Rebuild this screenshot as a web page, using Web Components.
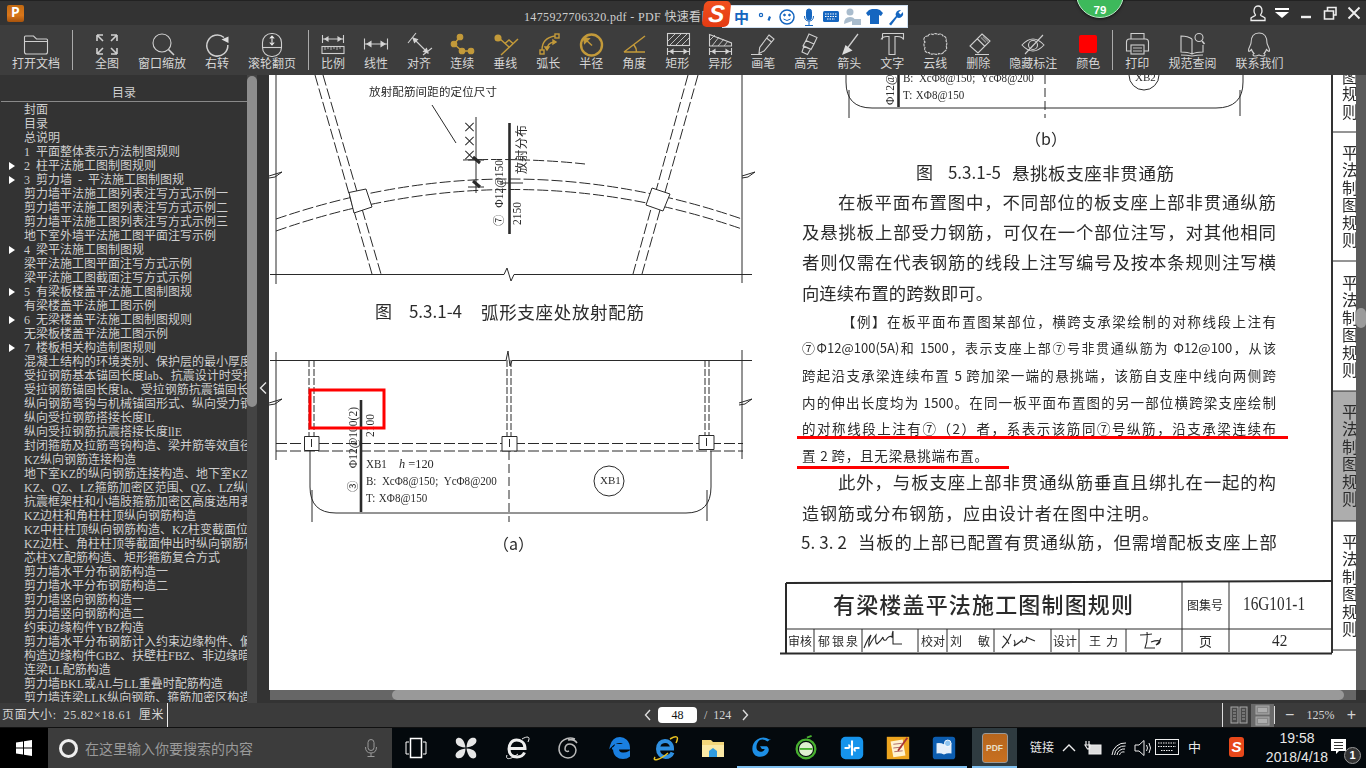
<!DOCTYPE html>
<html lang="zh-CN">
<head>
<meta charset="utf-8">
<title>PDF 快速看图</title>
<style>
html, body { margin: 0; padding: 0; background: #333; }
body { width: 1366px; height: 768px; overflow: hidden; display: flex; flex-direction: column; font-family: "Liberation Serif", "Noto Sans CJK SC", serif; font-size: 12px; }
.main { display: flex; height: 628px; }
</style>
</head>
<body>
<app-titlebar></app-titlebar>
<app-toolbar></app-toolbar>
<div class="main">
	<toc-panel></toc-panel>
	<scan-view></scan-view>
</div>
<app-status></app-status>
<win-taskbar></win-taskbar>

<script>
const UI_FONT = `"Liberation Serif", "Noto Sans CJK SC", sans-serif`;
const GOLD = "#c39a3a";

// Toolbar icons, 40 wide and centred over the label
const ICONS = {
	folder: `<path d="M8.5 21V6q0-1 1-1h8l3 3h10q1 0 1 1v12q0 2-2 2H10.5q-2 0-2-2zM8.5 10.5h23"/>`,
	full: `<path d="M10 4l6 6M10 4h6M10 4v6M30 4l-6 6M30 4h-6M30 4v6M10 23l6-6M10 23h6M10 23v-6M30 23l-6-6M30 23h-6M30 23v-6" stroke-width="1.6"/>`,
	zoom: `<circle cx="20" cy="12" r="9"/><path d="M26.5 18.5L32 24" stroke-width="1.6"/>`,
	rotate: `<path d="M27 6.5A10.500 10.500 0 1 0 30.8 14" stroke-width="1.5"/><path d="M24.5 8.500L31.5 5.5V12z" fill="#ddd" stroke="none"/>`,
	wheel: `<rect x="10.5" y="2.5" width="19" height="23" rx="9"/><path d="M10.5 16.5h19"/><path d="M20 5.5v8M17.8 7.5L20 5l2.2 2.5M17.8 11.5L20 14l2.2-2.5" stroke="#eee"/>`,
	scale: `<path d="M9.5 4v8M30.5 4v8M10 8h20"/><path d="M12 8l3-2v4zM28 8l-3-2v4z" fill="#ddd"/><rect x="9" y="15.5" width="22" height="7"/><path d="M12 16v3M15 16v2M18 16v3M21 16v2M24 16v3M27 16v2" stroke-width=".8"/>`,
	linear: `<path d="M8.5 7.5v11M31.5 7.5v11M9 13h22"/><path d="M11 13l4-2.5v5zM29 13l-4-2.5v5z" fill="#ddd"/>`,
	align: `<path d="M9 12L17 2M24 24l9-7M14 7l15 15"/><path d="M14 7l4.500 1.500-3 3zM29 22l-4.500-1.500 3-3z" fill="#ddd"/>`,
	chain: `<g stroke="${GOLD}" fill="${GOLD}"><path d="M18 6l-6 7 8 7h9" fill="none" stroke-width="1.5"/><circle cx="18" cy="6" r="2.8"/><circle cx="12" cy="13" r="2.8"/><circle cx="20" cy="20" r="2.8"/><circle cx="29" cy="20" r="2.8"/></g>`,
	perp: `<g stroke="${GOLD}" stroke-width="1.5"><path d="M33 8L16 24M14 7l10 9M20 12.5l4-3.5 4 3.5"/><circle cx="13" cy="7" r="2.8" fill="${GOLD}"/></g>`,
	arc: `<g stroke="${GOLD}" stroke-width="1.4"><path d="M14 19Q14 7 27 5M19 19Q19 12 26 11"/><rect x="12" y="19" width="4" height="4"/><rect x="27" y="3" width="4" height="4"/><path d="M17 16l2 3 2-3zM25 9l3 2-3 2z" fill="${GOLD}"/></g>`,
	radius: `<g stroke="${GOLD}"><circle cx="20.5" cy="14" r="10.5" stroke-width="2.4"/><path d="M21 14.5L14 8" stroke-width="1.4"/><path d="M12.5 6.5l6 1-5 5z" fill="${GOLD}"/></g>`,
	angle: `<g stroke="${GOLD}" stroke-width="1.5"><path d="M10 21h21M10 21L31 5M20 14q2.500 3 2.500 7"/></g>`,
	rectH: `<rect x="10.5" y="2.5" width="22" height="12"/><path d="M11 10l7-7M13 14l11-11M19 14l11-11M25 14l7-7" stroke-width=".9"/><path d="M10.5 17v7M32.5 17v7M11 20.5h21"/><path d="M13 20.5l3-2v4zM30 20.5l-3-2v4z" fill="#ddd"/>`,
	polyH: `<path d="M9.5 3.5L31.5 12v3h-22z"/><path d="M10 9l5-5M12 15l7-9M18 15l6-7M24 15l4-5" stroke-width=".9"/><path d="M9.5 17v7M31.5 17v7M10 20.5h21"/><path d="M12 20.5l3-2v4zM29 20.5l-3-2v4z" fill="#ddd"/>`,
	pencil: `<path d="M26 4l5 4-10 12-5 2.5.7-6zM23.5 7l5 4M8 23.5h11"/>`,
	marker: `<path d="M23 3l8 3.5-3 6.5-8-3.500zM20 9.500l8 3.500-3 5.500-8-3.500zM18 15l6.500 3-3 5.500-5.500-2.500z"/>`,
	arrow: `<path d="M29 3L17 19" stroke-width="1.3"/><path d="M13 24l3.5-10 7 5.500z" fill="#ddd" stroke="none"/>`,
	text: `<path d="M10.5 2.5h21v6c-1-2-3-3-6-3h-2.5v18h-6v-18H15c-3 0-5 1-6 3"/><path d="M10.5 2.5v6"/>`,
	cloud: `<path d="M13 5a3.500 3.500 0 0 1 5-1.500a4 4 0 0 1 5 0a3.500 3.500 0 0 1 5 1.500a3.500 3.500 0 0 1 3 5a4 4 0 0 1 0 5a3.500 3.500 0 0 1-2 5.500a3.500 3.500 0 0 1-5 2a4 4 0 0 1-5 0a3.500 3.500 0 0 1-5-1a3.500 3.500 0 0 1-4-5a4 4 0 0 1 0-5.500a3.500 3.500 0 0 1 3-6z" stroke-dasharray="3 .6"/>`,
	eraser: `<path d="M24 3l8 7-12 12-8-7zM19 7.5l7.5 7.5M17 23.5h14"/><path d="M23 6.500l5 5M25 5.500l5 5" stroke-width="1.500" stroke="#888"/>`,
	eye: `<path d="M9 14q11-12 22 0q-11 12-22 0z"/><circle cx="20" cy="14" r="4.5"/><path d="M12 23L30 4"/>`,
	color: `<rect x="11" y="4" width="18" height="18" rx="2" fill="#f00" stroke="none"/>`,
	print: `<path d="M14 8V2.5h13V8M14 20H9.5V11q0-3 3-3h16q3 0 3 3v9H27"/><rect x="14" y="14" width="13" height="9"/><path d="M16 17h9M16 20h9" stroke-width=".9"/>`,
	book: `<path d="M20 8q-4-3-11-3v16q7 0 11 2q4-2 11-2V14M20 8v15M9 24q6 0 11 1q5-1 11-1"/><circle cx="27" cy="6.5" r="4"/><path d="M30 10l2.5 3" stroke-width="1.6"/>`,
	qq: `<path d="M20 2c-6 0-8 5-8 10 0 2-3 5-2.500 8 .5 1 2-.5 3-1.500 .5 2 1.500 3 2.500 4-1.500 1-1.500 2.500 1 2.500 2 0 3-.5 4-1 1 .5 2 1 4 1 2.500 0 2.500-1.500 1-2.500 1-1 2-2 2.500-4 1 1 2.500 2.500 3 1.500 .5-3-2.500-6-2.500-8 0-5-2-10-8-10z"/>`
};

class AppTitlebar extends HTMLElement{

	connectedCallback(){

		this.attachShadow({mode: "open"});

		this.shadowRoot.innerHTML = `
<style>
:host { display: flex; align-items: center; height: 25px; position: relative; background: #333; border-top: 1px solid #222; box-sizing: border-box; color: #cfcfcf; font: 12px ${UI_FONT}; }
.logo { width: 17px; height: 17px; margin-left: 7px; border-radius: 2px; background: linear-gradient(#c26a12, #d9761a 60%, #a7530c); color: #fff; font: bold 14px/17px "Liberation Mono", monospace; text-align: center; }
.title { position: absolute; left: 524px; top: 6px; white-space: pre; letter-spacing: .35px; }
.controls { margin-left: auto; display: flex; }
.controls div { width: 24px; height: 24px; display: flex; align-items: center; justify-content: center; }
.controls svg { width: 20px; height: 20px; fill: none; stroke: #eee; stroke-width: 1.3; }
.badge { position: absolute; left: 1076px; top: -31px; width: 46px; height: 46px; border-radius: 50%; background: #3db95b; border: 1px solid #bde6c8; box-shadow: 0 1px 3px #0009; color: #fff; font: bold 11.5px/12px "Liberation Sans", sans-serif; text-align: center; }
.badge span { position: absolute; left: 0; right: 0; top: 33px; }
.ime { position: absolute; left: 703px; top: 0; height: 27px; width: 205px; display: flex; align-items: center; }
.ime .s { position: absolute; left: 0; top: 0; width: 27px; height: 26px; border-radius: 5px; transform: skewX(-6deg); background: linear-gradient(#f0501e, #e33a12); color: #fff; font: italic bold 24px/25px "Liberation Sans", sans-serif; text-align: center; }
.ime .bar { margin-left: 19px; margin-top: 3px; height: 23px; width: 186px; background: #fff; border: 1px solid #cfe0f2; box-sizing: border-box; position: relative; }
.ime .zh { position: absolute; left: 11px; top: 2px; color: #1566c0; font: bold 15px/18px "Noto Sans CJK SC", sans-serif; }
.ime svg { position: absolute; left: 0; top: 0; width: 184px; height: 21px; }
</style>
<div class="logo">P</div>
<div class="title">1475927706320.pdf - PDF 快速看图</div>
<div class="badge"><span>79</span></div>
<div class="ime">
	<div class="bar">
		<div class="zh">中</div>
		<svg viewBox="722 3 184 21" fill="none" stroke="#1566c0">
			<circle cx="760" cy="12" r="1.6" stroke-width="1.2"/><path d="M769 13.5l-1.5 4" stroke-width="2.2"/>
			<circle cx="786" cy="14" r="7" stroke-width="1.5"/><circle cx="783.5" cy="12" r=".9" fill="#1566c0"/><circle cx="788.5" cy="12" r=".9" fill="#1566c0"/><path d="M782.5 16q3.500 3 7 0"/>
			<rect x="805.5" y="6" width="5" height="11" rx="2.5" fill="#1566c0"/><path d="M803.5 13q0 5 4.500 5t4.500-5M808 18v4M804 22.5h8"/>
			<rect x="822" y="8" width="16" height="11" rx="1.5" fill="#1566c0" stroke="none"/><path d="M824 11h12M824 13.5h12M826 16h8" stroke="#fff" stroke-dasharray="1.5 1"/>
			<circle cx="849" cy="9" r="3.5" fill="#a9bccd" stroke="none"/><path d="M843 21q0-7 6-7 4 0 5 3" fill="#a9bccd" stroke="none"/><rect x="851" y="16" width="9" height="6" fill="#a9bccd" stroke="none"/>
			<path d="M868 7l3-1h5l3 1 3 3-2 3-2-1v9h-9v-9l-2 1-2-3z" fill="#1566c0" stroke="none"/>
			<path d="M888 21l7-8a4.500 4.500 0 0 1 5-6l-2.500 2.500 2 2L902 9a4.500 4.500 0 0 1-6 5.500l-6 8z" fill="#1566c0" stroke="none"/>
		</svg>
	</div>
	<div class="s">S</div>
</div>
<div class="controls">
	<div><svg viewBox="0 0 20 20"><path d="M10 3c-3 0-4 2.500-4 5 0 2 1 3 1.500 4 0 1-3 1.500-4.500 3v2.500h14V15c-1.500-1.500-4.500-2-4.500-3 .5-1 1.500-2 1.500-4 0-2.500-1-5-4-5z"/></svg></div>
	<div><svg viewBox="0 0 20 20"><path d="M3 5h14v2H3z" fill="#fff" stroke="none"/><path d="M3 9h14l-7 6z" fill="#fff" stroke="none"/></svg></div>
	<div><svg viewBox="0 0 20 20"><path d="M5 14h10" stroke-width="2.4"/></svg></div>
	<div><svg viewBox="0 0 20 20"><path d="M4.500 8h9v8h-9zM7.500 8V4.500h8.500V12h-3" stroke-width="1.6"/></svg></div>
	<div><svg viewBox="0 0 20 20"><path d="M4.500 4.500l11 11M15.500 4.500l-11 11" stroke-width="1.9"/></svg></div>
</div>
		`;

	}

}

class ToolBtn extends HTMLElement{

	connectedCallback(){

		this.attachShadow({mode: "open"});

		this.shadowRoot.innerHTML = `
<style>
:host { display: flex; flex-direction: column; align-items: center; padding-top: 6px; color: #d6d6d6; font: 12px/14px ${UI_FONT}; }
/* the icon is wider than a two character label, so it takes no room of its own */
.icon { height: 26px; width: 0; display: flex; justify-content: center; }
svg { flex: none; width: 40px; height: 26px; overflow: visible; fill: none; stroke: #cfcfcf; stroke-width: 1.1; }
span { white-space: nowrap; }
</style>
<div class="icon"><svg viewBox="0 0 40 26">${ICONS[this.getAttribute("icon")]}</svg></div>
<span>${this.getAttribute("label")}</span>
		`;

	}

}

class AppToolbar extends HTMLElement{

	connectedCallback(){

		this.attachShadow({mode: "open"});

		const groups = [
			[["folder", "打开文档"]],
			[["full", "全图"], ["zoom", "窗口缩放"], ["rotate", "右转"], ["wheel", "滚轮翻页"]],
			[["scale", "比例"], ["linear", "线性"], ["align", "对齐"], ["chain", "连续"], ["perp", "垂线"], ["arc", "弧长"], ["radius", "半径"], ["angle", "角度"], ["rectH", "矩形"], ["polyH", "异形"], ["pencil", "画笔"], ["marker", "高亮"], ["arrow", "箭头"], ["text", "文字"], ["cloud", "云线"], ["eraser", "删除"], ["eye", "隐藏标注"], ["color", "颜色"]],
			[["print", "打印"], ["book", "规范查阅"], ["qq", "联系我们"]]
		];

		const html = groups.map((tools, i) => `
			${i ? `<i></i>` : ""}
			<div class="group">
				${tools.map(([icon, label]) => `<tool-btn icon="${icon}" label="${label}"></tool-btn>`).join("")}
			</div>
		`).join("");

		this.shadowRoot.innerHTML = `
<style>
:host { display: flex; height: 50px; background: #3d3d3d; padding-left: 12px; }
.group { display: flex; gap: 19px; }
i { width: 1px; height: 40px; margin: 5px 12px 0; background: #aaa; }
i:nth-of-type(1) { margin-right: 22px; }
</style>
${html}
		`;

	}

}

class TocRow extends HTMLElement{

	connectedCallback(){

		this.attachShadow({mode: "open"});

		const open = this.hasAttribute("branch");
		this.shadowRoot.innerHTML = `
<style>
:host { display: block; height: 14px; line-height: 14px; padding-left: 24px; position: relative; white-space: nowrap; overflow: hidden; word-spacing: 3px; }
b { position: absolute; left: 9px; top: 3px; border-left: 6px solid #fff; border-top: 4.5px solid transparent; border-bottom: 4.5px solid transparent; }
</style>
${open ? "<b></b>" : ""}<slot></slot>
		`;

	}

}

class TocPanel extends HTMLElement{

	connectedCallback(){

		this.attachShadow({mode: "open"});

		const rows = [
			"封面", "目录", "总说明", "1 平面整体表示方法制图规则", ">2 柱平法施工图制图规则", ">3 剪力墙 - 平法施工图制图规",
			"剪力墙平法施工图列表注写方式示例一", "剪力墙平法施工图列表注写方式示例二", "剪力墙平法施工图列表注写方式示例三", "地下室外墙平法施工图平面注写示例",
			">4 梁平法施工图制图规", "梁平法施工图平面注写方式示例", "梁平法施工图截面注写方式示例", ">5 有梁板楼盖平法施工图制图规", "有梁楼盖平法施工图示例",
			">6 无梁楼盖平法施工图制图规则", "无梁板楼盖平法施工图示例", ">7 楼板相关构造制图规则",
			"混凝土结构的环境类别、保护层的最小厚度", "受拉钢筋基本锚固长度lab、抗震设计时受拉钢筋", "受拉钢筋锚固长度la、受拉钢筋抗震锚固长度", "纵向钢筋弯钩与机械锚固形式、纵向受力钢筋",
			"纵向受拉钢筋搭接长度lL", "纵向受拉钢筋抗震搭接长度llE", "封闭箍筋及拉筋弯钩构造、梁并筋等效直径", "KZ纵向钢筋连接构造", "地下室KZ的纵向钢筋连接构造、地下室KZ的",
			"KZ、QZ、LZ箍筋加密区范围、QZ、LZ纵向钢筋", "抗震框架柱和小墙肢箍筋加密区高度选用表", "KZ边柱和角柱柱顶纵向钢筋构造", "KZ中柱柱顶纵向钢筋构造、KZ柱变截面位置", "KZ边柱、角柱柱顶等截面伸出时纵向钢筋构造",
			"芯柱XZ配筋构造、矩形箍筋复合方式", "剪力墙水平分布钢筋构造一", "剪力墙水平分布钢筋构造二", "剪力墙竖向钢筋构造一", "剪力墙竖向钢筋构造二", "约束边缘构件YBZ构造",
			"剪力墙水平分布钢筋计入约束边缘构件、偏心", "构造边缘构件GBZ、扶壁柱FBZ、非边缘暗柱", "连梁LL配筋构造", "剪力墙BKL或AL与LL重叠时配筋构造", "剪力墙连梁LLK纵向钢筋、箍筋加密区构造"
		];

		const html = rows.map(row => row[0] === ">"
			? `<toc-row branch>${row.slice(1)}</toc-row>`
			: `<toc-row>${row}</toc-row>`).join("");

		this.shadowRoot.innerHTML = `
<style>
:host { display: flex; width: 269px; height: 628px; flex: none; background: #333; color: #cfcfcf; font: 12px ${UI_FONT}; }
.tree { width: 247px; display: flex; flex-direction: column; overflow: hidden; }
header { height: 26px; line-height: 36px; text-align: center; border-bottom: 1px solid #8a8a8a; margin-left: 1px; flex: none; }
.rows { padding-top: 1px; height: 599px; overflow: hidden; }
.track { width: 10px; background: #444; flex: none; }
.thumb { height: 331px; margin-top: 1px; background: #8e8e8e; border-radius: 5px; }
.fold { flex: 1; display: flex; align-items: flex-start; justify-content: center; }
.fold svg { width: 10px; height: 14px; margin-top: 306px; fill: none; stroke: #e6e6e6; stroke-width: 1.4; }
</style>
<div class="tree"><header>目录</header><div class="rows">${html}</div></div>
<div class="track"><div class="thumb"></div></div>
<div class="fold"><svg viewBox="0 0 10 14"><path d="M8 1.5L2.5 7 8 12.5"/></svg></div>
		`;

	}

}

// A piece of text on the scanned page: x and y in screen pixels, y is the centre of the line
class ScanLine extends HTMLElement{

	connectedCallback(){

		this.attachShadow({mode: "open"});

		const get = name => this.getAttribute(name);
		const size = Number(get("size") || 12);
		const width = get("w");
		const x = Number(get("x")) - 269;
		const y = Number(get("y")) - 75;
		const squeeze = get("sx") ? `scaleX(${get("sx")})` : "";

		const place = this.hasAttribute("up")
			? `left:${x}px; top:${y}px; transform-origin: 0 0; transform: rotate(-90deg) ${squeeze};`
			: `left:${x}px; top:${y - size * .6}px; transform-origin: 0 50%; transform: ${squeeze || "none"};`;

		this.shadowRoot.innerHTML = `
<style>
:host { display: block; position: absolute; ${place} ${width ? `width:${width}px;` : "white-space: nowrap;"} font-size: ${size}px; line-height: ${size * 1.2}px; text-align: justify; text-align-last: justify; font-weight: ${get("weight") || 400}; font-family: ${get("face") === "serif" ? `"Liberation Serif", "Noto Sans CJK SC", serif` : `"Noto Sans CJK SC", "Liberation Sans", sans-serif`}; }
</style>
<slot></slot>
		`;

	}

}

class ScanTab extends HTMLElement{

	connectedCallback(){

		this.attachShadow({mode: "open"});

		this.shadowRoot.innerHTML = `
<style>
:host { display: block; position: absolute; left: ${1342 - 269}px; top: ${Number(this.getAttribute("y")) - 75}px; writing-mode: vertical-rl; text-orientation: upright; font: 16px/16px "Noto Sans CJK SC", sans-serif; letter-spacing: 1.4px; }
</style>
<slot></slot>
		`;

	}

}

class ScanView extends HTMLElement{

	connectedCallback(){

		this.attachShadow({mode: "open"});

		this.shadowRoot.innerHTML = `
<style>
:host { display: block; width: 1097px; height: 628px; flex: none; position: relative; background: #333; }
.row { display: flex; height: 615px; }
.page { width: 1087px; height: 615px; position: relative; overflow: hidden; background: #fff; color: #2b2b2b; }
.paper { position: absolute; inset: 0; filter: blur(.35px); }
.paper svg, .marks { position: absolute; left: 0; top: 0; }
.paper svg { fill: none; stroke: #2a2a2a; stroke-width: 1; }
.dash { stroke-dasharray: 11 3; }
.vbar { width: 10px; background: #5a5a5a; position: relative; }
.vbar div { position: absolute; left: 0; top: 233px; width: 10px; height: 20px; border-radius: 5px; background: #9c9c9c; }
.hbar { display: flex; height: 10px; background: #666; margin-left: 1px; width: 1086px; }
.hbar div { margin-left: 122px; width: 952px; background: #999; border-radius: 5px; }
</style>
<div class="row">
<div class="page">
<div class="paper">
<svg width="1087" height="615" viewBox="269 75 1087 615">
	<!-- upper left figure -->
	<path d="M276 75V284M742 75V283M270 274.5H504L507 268 511 281 514 274.5H752"/>
	<path d="M269 176l13-4-7 5-6 1M742 176l13-4-7 5-6 1"/>
	<g class="dash">
		<path d="M315 75L372 274M323 75L381 274M688 75L633 274M698 75L642 274"/>
		<path d="M276 219Q510 139 742 219M276 231Q510 149 742 229"/>
		<path d="M463 160Q530 158 585 164"/>
	</g>
	<path d="M349 192.5L366 189 372 207 354 213zM652 188L670 194 663 211 646 205z" fill="#fff"/>
	<path d="M432 105L456 143M476 117V193M468 160H484M468 187H484"/>
	<path d="M473 157l7 6M473 181l7 6" stroke-width="3"/>
	<path d="M509.5 123V234" stroke-width="2.6"/>
	<path d="M500 183H523"/>
	<!-- lower left figure -->
	<path d="M270 360.5H506L508 351 510 366 512 360.5H752M276 352V460M742 350V459"/>
	<path d="M269 403l13-4-7 5-6 1M739 403l13-4-7 5-6 1"/>
	<g class="dash">
		<path d="M276 443.5H743M276 451H743"/>
		<path d="M309 360V436M314 360V436M507 360V436M511 360V436M705 360V435M709 360V435" stroke-dasharray="7 2"/>
		<path d="M509 451V522" stroke-dasharray="9 4"/>
	</g>
	<path d="M304.5 436.5H319V450.5H304.5zM502 436.5H517V451H502zM699 435.5H714V449.5H699z" fill="#fff"/>
	<path d="M311.5 439v8M509.5 439v8M706.5 438v8"/>
	<path d="M310 451V487Q310 513 336 513H686Q711 513 711 487V451M312 490V522M707 490V521"/>
	<path d="M361 400V512" stroke-width="2.6"/>
	<circle cx="609" cy="481" r="15"/>
	<!-- top of the second figure -->
	<path d="M846 75V82Q846 108 872 108H1216Q1243 108 1243 82V75M849 90V118M1240 90V116"/>
	<path d="M1045 75V118" stroke-dasharray="9 4"/>
	<path d="M898.5 75V107" stroke-width="2.6"/>
	<circle cx="1144" cy="75" r="15"/>
	<!-- frame and title block -->
	<path d="M1332 75V653" stroke-width="2" stroke="#333"/>
	<rect x="1333" y="391" width="23" height="130" fill="#adadad" stroke="none"/>
	<path d="M1333 132H1356M1333 261H1356M1333 391H1356M1333 521H1356M1333 650H1356"/>
	<path d="M786 583L1332 581M786 583V653M780 653.5H1332" stroke-width="2"/>
	<path d="M786 629H1332M1182 582V652M1229 582V652M814 629V652M862 629V652M918 629V652M947 629V652M994 629V652M1051 629V652M1079 629V652M1126 629V652"/>
	<!-- signatures -->
	<path d="M864 648q4-10 7-13-3 8-2 11 3-6 7-11-1 8 1 9 4-3 6-7 0 4 3 3 3-5 6-3 0-4 1-6 0 8 0 13h9M1002 648q6-6 9-14M1003 636q4 3 6 8M1014 640q2 3 0 6 5-3 8-6 0 3 3 2 3-3 1-5 4 2 9 4M1140 635q6 0 12-1M1147 632q1 8-2 16h10M1151 642q6-2 9-1 0 3-4 4 3-2 5-7" stroke-width="1.1"/>
</svg>

<scan-line x="369" y="92" w="128" size="11.5">放射配筋间距的定位尺寸</scan-line>
<scan-line x="460" y="162" w="33" size="14" up>×××</scan-line>
<scan-line x="514" y="174" w="49" size="12" up>放射分布</scan-line>
<scan-line x="511" y="225" w="25" size="11.5" face="serif" up>2150</scan-line>
<scan-line x="493" y="226" w="66" size="11.5" face="serif" up>⑦ Φ12@150</scan-line>
<scan-line x="375" y="311" w="87" size="17">图 5.3.1-4</scan-line>
<scan-line x="481" y="311" w="163" size="17.5">弧形支座处放射配筋</scan-line>

<scan-line x="347" y="492" w="85" size="11.5" face="serif" up>③ Φ12@100(2)</scan-line>
<scan-line x="364" y="437" w="27" size="11.5" face="serif" up>2100</scan-line>
<scan-line x="366" y="464" size="13" sx=".85" face="serif">XB1</scan-line>
<scan-line x="399" y="464" size="13" sx=".95" face="serif"><i>h</i> =120</scan-line>
<scan-line x="366" y="481" w="154" size="13" sx=".85" face="serif">B: XcΦ8@150; YcΦ8@200</scan-line>
<scan-line x="366" y="498" w="72" size="13" sx=".85" face="serif">T: XΦ8@150</scan-line>
<scan-line x="600" y="481" w="18" size="11" face="serif">XB1</scan-line>
<scan-line x="493" y="544" size="16">（a）</scan-line>

<scan-line x="903" y="78" w="154" size="13" sx=".85" face="serif">B: XcΦ8@150; YcΦ8@200</scan-line>
<scan-line x="903" y="95" w="72" size="13" sx=".85" face="serif">T: XΦ8@150</scan-line>
<scan-line x="1135" y="78" w="18" size="11" face="serif">XB2</scan-line>
<scan-line x="884" y="105" w="30" size="11.5" face="serif" up>Φ12@1</scan-line>
<scan-line x="1025" y="139" size="16">（b）</scan-line>
<scan-line x="916" y="172" w="85" size="17">图 5.3.1-5</scan-line>
<scan-line x="1012" y="172" w="162" size="17.5">悬挑板支座非贯通筋</scan-line>

<scan-line x="838" y="202" w="438" size="17.4">在板平面布置图中，不同部位的板支座上部非贯通纵筋</scan-line>
<scan-line x="802" y="232" w="474" size="17.4">及悬挑板上部受力钢筋，可仅在一个部位注写，对其他相同</scan-line>
<scan-line x="802" y="262" w="474" size="17.4">者则仅需在代表钢筋的线段上注写编号及按本条规则注写横</scan-line>
<scan-line x="802" y="293" w="191" size="17.3">向连续布置的跨数即可。</scan-line>

<scan-line x="842" y="321" w="434" size="13.5">【例】在板平面布置图某部位，横跨支承梁绘制的对称线段上注有</scan-line>
<scan-line x="802" y="348" w="474" size="13">⑦Φ12@100(5A)和 1500，表示支座上部⑦号非贯通纵筋为 Φ12@100，从该</scan-line>
<scan-line x="802" y="375" w="474" size="13.5">跨起沿支承梁连续布置 5 跨加梁一端的悬挑端，该筋自支座中线向两侧跨</scan-line>
<scan-line x="802" y="402" w="474" size="13.5">内的伸出长度均为 1500。在同一板平面布置图的另一部位横跨梁支座绘制</scan-line>
<scan-line x="802" y="428" w="474" size="13.5">的对称线段上注有⑦（2）者，系表示该筋同⑦号纵筋，沿支承梁连续布</scan-line>
<scan-line x="802" y="455" w="186" size="13.5">置 2 跨，且无梁悬挑端布置。</scan-line>

<scan-line x="838" y="482" w="438" size="17.4">此外，与板支座上部非贯通纵筋垂直且绑扎在一起的构</scan-line>
<scan-line x="802" y="513" w="357" size="17">造钢筋或分布钢筋，应由设计者在图中注明。</scan-line>
<scan-line x="801" y="542" w="46" size="17">5. 3. 2</scan-line>
<scan-line x="858" y="542" w="419" size="17.4">当板的上部已配置有贯通纵筋，但需增配板支座上部</scan-line>

<scan-line x="833" y="603" w="300" size="22" weight="500">有梁楼盖平法施工图制图规则</scan-line>
<scan-line x="1187" y="605" w="36" size="12">图集号</scan-line>
<scan-line x="1243" y="605" w="76" size="18" sx=".85" face="serif">16G101-1</scan-line>
<scan-line x="788" y="641" w="24" size="12">审核</scan-line>
<scan-line x="818" y="641" w="40" size="12">郁银泉</scan-line>
<scan-line x="921" y="641" w="24" size="12">校对</scan-line>
<scan-line x="950" y="641" w="40" size="12">刘 敏</scan-line>
<scan-line x="1053" y="641" w="24" size="12">设计</scan-line>
<scan-line x="1089" y="641" w="29" size="12">王 力</scan-line>
<scan-line x="1199" y="641" size="13">页</scan-line>
<scan-line x="1272" y="641" size="17" sx=".9" face="serif">42</scan-line>

<scan-tab y="69">图规则</scan-tab>
<scan-tab y="145">平法制图规则</scan-tab>
<scan-tab y="275">平法制图规则</scan-tab>
<scan-tab y="404">平法制图规则</scan-tab>
<scan-tab y="534">平法制图规则</scan-tab>
</div>
<svg class="marks" width="1087" height="615" viewBox="269 75 1087 615" fill="none" stroke="#f00">
	<rect x="310" y="390" width="74" height="38" stroke-width="3"/>
	<path d="M797 437.5H1288M797 467.5H1009" stroke-width="3"/>
</svg>
</div>
<div class="vbar"><div></div></div>
</div>
<div class="hbar"><div></div></div>
		`;

	}

}

class AppStatus extends HTMLElement{

	connectedCallback(){

		this.attachShadow({mode: "open"});

		this.shadowRoot.innerHTML = `
<style>
:host { display: flex; align-items: center; height: 25px; box-sizing: border-box; border-bottom: 1px solid #111; background: #3b3b3b; color: #d4d4d4; font: 12px ${UI_FONT}; word-spacing: 3px; }
.size { width: 165px; height: 100%; padding-left: 2px; line-height: 24px; border-right: 1px solid #eee; white-space: nowrap; letter-spacing: .7px; flex: none; }
.nav { margin-left: 475px; display: flex; align-items: center; }
.nav svg { width: 9px; height: 14px; fill: none; stroke: #ddd; stroke-width: 1.4; }
.page { width: 39px; height: 16px; margin: 0 7px 0 6px; border-radius: 4px; background: #fff; color: #111; text-align: center; line-height: 16px; }
.total { width: 37px; }
.views { margin-left: auto; display: flex; height: 100%; align-items: stretch; border-left: 1px solid #ddd; }
.views svg { width: 51px; height: 24px; }
.zoom { display: flex; align-items: center; width: 92px; padding: 0 10px; box-sizing: border-box; justify-content: space-between; border-left: 1px solid #ddd; font-size: 12px; }
.zoom span:first-child, .zoom span:last-child { font: 16px "Liberation Sans", sans-serif; }
</style>
<div class="size">页面大小: 25.82×18.61 厘米</div>
<div class="nav">
	<svg viewBox="0 0 9 14"><path d="M7 2L2.5 7 7 12"/></svg>
	<div class="page">48</div>
	<div class="total">/ 124</div>
	<svg viewBox="0 0 9 14"><path d="M2 2L6.5 7 2 12"/></svg>
</div>
<div class="views">
	<svg viewBox="0 0 51 24" fill="none" stroke="#aaa">
		<rect x="8" y="4" width="7" height="16" fill="#4a4a4a"/><rect x="17" y="4" width="7" height="16" fill="#4a4a4a"/>
		<path d="M10 7h3M10 10h3M10 13h3M10 16h3M19 7h3M19 10h3M19 13h3M19 16h3" stroke-width=".9"/>
		<rect x="28" y="1" width="23" height="23" fill="#6a6a6a" stroke="none"/>
		<rect x="33" y="3" width="13" height="8" fill="#888"/><rect x="33" y="14" width="13" height="8" fill="#888"/>
		<path d="M35 6h9M35 8h9M35 17h9M35 19h9" stroke="#ddd" stroke-width=".9"/>
	</svg>
</div>
<div class="zoom"><span>−</span><span>125%</span><span>+</span></div>
		`;

	}

}

// Taskbar icons, 30x30
const TASK_ICONS = {
	view: `<path d="M9.5 5.5h11v19h-11z" fill="none" stroke="#fff" stroke-width="1.5"/><path d="M8 9H5v12h3M22 9h3v12h-3" fill="none" stroke="#fff"/>`,
	fan: `<g fill="#e6e6e6"><path d="M14.5 14.5C6 14 4 10 5 6.5 7 3 13 4 14.5 14.5z"/><path d="M15.5 14.5C16 6 20 4 24 5c3 2 2 8-8.500 9.500z"/><path d="M15.5 15.5C24 16 26 20 25 24c-2 3-8 2-9.500-8.500z"/><path d="M14.5 15.5C14 24 10 26 6 25c-3-2-2-8 8.500-9.500z"/></g>`,
	ie: `<path d="M8 15.5h15C23 9 18 7 14.5 7 10 7 7 11 7 16s3.5 8 8 8c4 0 6.5-2 7.5-4.5" fill="none" stroke="#eee" stroke-width="3"/><path d="M5 22C3 27 8 27 16 21M20 6c5-3 9-3 6 3" fill="none" stroke="#eee"/>`,
	spiral: `<path d="M22 6C14 3 6 8 6 16c0 6 5 9 9 9 5 0 8-4 8-8 0-3-3-6-6-6-4 0-5 3-5 5s2 3 4 2M15 7c4-1 7 0 9 3" fill="none" stroke="#bbb" stroke-width="1.5"/>`,
	edge: `<path d="M7 15.5h17C24 8 19 5 15 5 10 5 7 9 6 13c3-3 7-4 9-4 3 0 4 2 4 3H10M9 16c0 6 4 9 9 9 3 0 5-1 6-2v-4c-3 2-11 3-11-3" fill="#1a7fe0" stroke="#1a7fe0" stroke-width="2"/>`,
	ieColor: `<path d="M9 15.5h13C22 10 18 8 15 8c-4 0-7 3-7 8s3.5 8 7.5 8c4 0 6-2 7-4.5" fill="none" stroke="#2f8fe0" stroke-width="4"/><path d="M5 24C2 29 10 27 18 20M20 6c5-3 10-4 6 4" fill="none" stroke="#e8c020" stroke-width="1.5"/>`,
	folder: `<path d="M4 7h9l2 2h11v15H4z" fill="#f3d67a"/><path d="M4 12h22v12H4z" fill="#fbe9a6"/><path d="M11 24v-6l4-3 4 3v6z" fill="#2f9be0"/>`,
	gblue: `<path d="M25 6c-4-3-9-3-13 0-6 4-7 13-2 17 5 3 12 1 14-4 1-3 0-5-2-6h-7l2 3h3c-1 3-5 4-7 2-3-2-2-8 1-11 3-2 6-1 9 1l4-3z" fill="#1d8fe6"/>`,
	green: `<circle cx="15" cy="16" r="10" fill="none" stroke="#48b030" stroke-width="2.5"/><circle cx="15" cy="16" r="7.5" fill="#dff0d0"/><path d="M8 16h14" stroke="#48b030" stroke-width="2"/><path d="M16 4l5-2" stroke="#48b030" stroke-width="2"/>`,
	cross: `<rect x="3" y="3" width="24" height="24" rx="5" fill="#1694ec"/><path d="M15 7v16M7 15h4c2 0 2-3 0-3M23 15h-4c-2 0-2 3 0 3" fill="none" stroke="#fff" stroke-width="2.2"/>`,
	note: `<rect x="3" y="3" width="24" height="24" fill="#eda51f"/><path d="M7 8l13-2 3 17-13 2z" fill="#fff3d0"/><path d="M10 11l9-1M10 15l9-1M11 19l9-1" stroke="#a66" /><path d="M25 4L15 18" stroke="#a33" stroke-width="2"/>`,
	book: `<rect x="3" y="3" width="24" height="24" rx="3" fill="#0c5db0"/><path d="M7 10q4-1 8 1 4-2 8-1v11q-4-1-8 1-4-2-8-1z" fill="#e6f0fa"/><circle cx="19" cy="10" r="3.5" fill="#8fc4ef" stroke="#fff"/>`
};

class WinTaskbar extends HTMLElement{

	connectedCallback(){

		this.attachShadow({mode: "open"});

		const apps = [
			["view", 1, 0], ["fan", 4, 0], ["ie", 5, 0], ["spiral", 5, 0], ["edge", 6, 0], ["ieColor", -1, 0],
			["folder", 2, 0], ["gblue", 1, 1], ["green", 0, 1], ["cross", 0, 1], ["note", 0, 1], ["book", 0, 1]
		];

		const html = apps.map(([icon, gap, running]) => `
			<div class="app ${running ? "on" : ""}" style="margin-left:${gap}px"><svg viewBox="0 0 30 30">${TASK_ICONS[icon]}</svg></div>
		`).join("");

		this.shadowRoot.innerHTML = `
<style>
:host { display: flex; height: 40px; background: #04090d; color: #e8e8e8; font: 14px "Noto Sans CJK SC", sans-serif; }
.start { width: 48px; background: #000; display: flex; align-items: center; justify-content: center; flex: none; }
.start svg { width: 16px; height: 16px; }
.search { width: 344px; background: #3c3c3c; display: flex; align-items: center; position: relative; color: #9a9a9a; flex: none; }
.ring { width: 13px; height: 13px; margin-left: 11px; border-radius: 50%; border: 3px solid #eee; flex: none; }
.search span { margin-left: 7px; }
.search svg { position: absolute; left: 315px; top: 10px; width: 16px; height: 20px; fill: none; stroke: #999; }
.apps { display: flex; }
.app { width: 46px; height: 40px; display: flex; align-items: center; justify-content: center; box-sizing: border-box; }
.app svg { width: 30px; height: 30px; }
.app.on { box-shadow: inset 0 -2px 0 #80c0f0; }
.app.on svg { width: 28px; height: 28px; }
.pdf { width: 45px; background: #2f3b40; }
.pdf div { width: 24px; height: 28px; border-radius: 3px; background: linear-gradient(#b5651d, #c87020); border: 1px solid #999; color: #e8dfc8; font: bold 8.5px/28px "Liberation Sans", sans-serif; text-align: center; }
.tray { margin-left: 13px; position: relative; flex: 1; }
.tray span, .tray svg, .tray .clock { position: absolute; }
.clock { left: 235px; top: 1px; width: 64px; text-align: center; font: 14px/19px "Liberation Sans", "Noto Sans CJK SC", sans-serif; white-space: nowrap; }
.tray svg { fill: none; stroke: #eee; }
.count { left: 314px; top: 19px; width: 15px; height: 15px; border-radius: 50%; background: #333; border: 1px solid #999; font: bold 11px/15px "Liberation Sans", sans-serif; text-align: center; color: #fff; }
.ts { left: 199px; top: 9px; width: 15px; height: 20px; border-radius: 3px; background: #e8481a; color: #fff; font: italic bold 15px/20px "Liberation Sans", sans-serif; text-align: center; }
</style>
<div class="start"><svg viewBox="0 0 16 16"><path d="M0 2.5l7-1v6H0zM8 1.3L16 0v7.5H8zM0 8.5h7v6l-7-1zM8 8.5h8V16l-8-1.3z" fill="#fff"/></svg></div>
<div class="search">
	<div class="ring"></div><span>在这里输入你要搜索的内容</span>
	<svg viewBox="0 0 16 20"><rect x="5" y="1.5" width="6" height="11" rx="3"/><path d="M2.5 9q0 6 5.500 6t5.500-6M8 15v3M4.500 18.500h7"/></svg>
</div>
<div class="apps">
	${html}
	<div class="app on pdf" style="margin-left:5px"><div>PDF</div></div>
</div>
<div class="tray">
	<span style="left:0;top:10px;font-size:12px;line-height:18px">链接</span>
	<svg style="left:32px;top:15px" width="14" height="10" viewBox="0 0 14 10"><path d="M1 8l6-6 6 6" stroke-width="1.4"/></svg>
	<svg style="left:54px;top:11px" width="18" height="18" viewBox="0 0 18 18"><rect x="5" y="6" width="12" height="9" fill="#ddd"/><path d="M2 2v4M5 2v4M1 6h5v2q0 2-2.500 2z" stroke-width="1.2"/></svg>
	<svg style="left:80px;top:11px" width="18" height="18" viewBox="0 0 18 18"><path d="M2 16a13 13 0 0 1 14-12M4.500 16a10 10 0 0 1 11-9M7 16a7 7 0 0 1 8-6M9.500 16a4 4 0 0 1 5-3"/></svg>
	<svg style="left:104px;top:10px" width="18" height="20" viewBox="0 0 18 20"><path d="M1 7h4l5-4.500v15L5 13H1zM12.500 7q2 3 0 6M15 5q3 5 0 10"/></svg>
	<svg style="left:125px;top:11px" width="24" height="17" viewBox="0 0 24 17"><rect x=".5" y=".5" width="23" height="15"/><path d="M3 4h18M3 7.500h18M6 11.500h12" stroke-dasharray="1.5 1"/></svg>
	<span style="left:158px;top:10px;font-size:13px;line-height:18px">中</span>
	<span class="ts">S</span>
	<div class="clock">19:58<br>2018/4/18</div>
	<svg style="left:300px;top:10px" width="18" height="18" viewBox="0 0 18 18"><path d="M1 1h15v12H9l-3 3v-3H1z" fill="#fff" stroke="none"/><path d="M4 4.500h9M4 7.500h9M4 10.500h9" stroke="#333"/></svg>
	<span class="count">1</span>
</div>
		`;

	}

}

customElements.define("app-titlebar", AppTitlebar);
customElements.define("tool-btn", ToolBtn);
customElements.define("app-toolbar", AppToolbar);
customElements.define("toc-row", TocRow);
customElements.define("toc-panel", TocPanel);
customElements.define("scan-line", ScanLine);
customElements.define("scan-tab", ScanTab);
customElements.define("scan-view", ScanView);
customElements.define("app-status", AppStatus);
customElements.define("win-taskbar", WinTaskbar);
</script>
</body>
</html>
